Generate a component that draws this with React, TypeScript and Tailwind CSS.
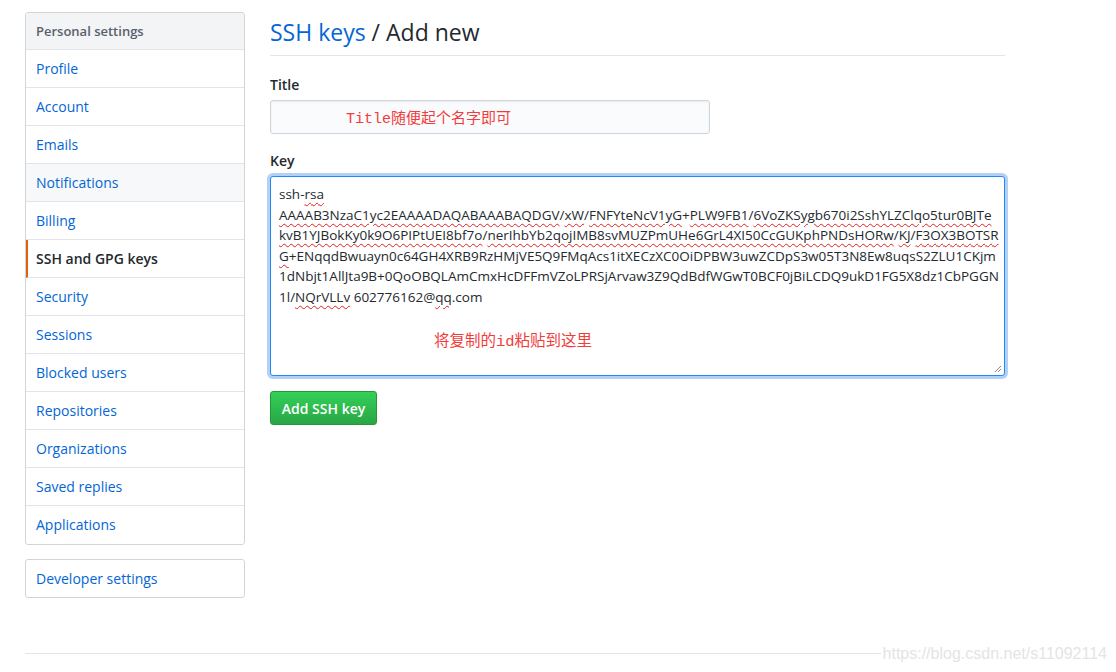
import type { ReactNode } from "react"

const NAV = [
  "Profile",
  "Account",
  "Emails",
  "Notifications",
  "Billing",
  "SSH and GPG keys",
  "Security",
  "Sessions",
  "Blocked users",
  "Repositories",
  "Organizations",
  "Saved replies",
  "Applications",
]

// wavy red underline, like the browser spellcheck marks in the shot
function W({ children }: { children: ReactNode }) {
  return (
    <span className="underline decoration-wavy decoration-[#e02020] decoration-1 underline-offset-[3px]">
      {children}
    </span>
  )
}

function Sidebar() {
  return (
    <div className="flex w-[220px] shrink-0 flex-col gap-[14px]">
      <nav className="overflow-hidden rounded-[3px] border border-[#d1d5da] bg-white">
        <div className="h-[37px] border-b border-[#e1e4e8] bg-[#f3f4f6] px-[10px] text-[13px] leading-[37px] font-semibold text-[#586069]">
          Personal settings
        </div>
        {NAV.map((item, i) => {
          const selected = item === "SSH and GPG keys"
          const hovered = item === "Notifications"
          return (
            <div
              key={item}
              className={
                "h-[38px] px-[10px] text-[14px] leading-[37px] " +
                (i < NAV.length - 1 ? "border-b border-[#e1e4e8] " : "") +
                (selected
                  ? "border-l-2 border-l-[#e36209] pl-[8px] font-semibold text-[#24292e]"
                  : hovered
                    ? "bg-[#f6f8fa] text-[#0366d6]"
                    : "text-[#0366d6]")
              }
            >
              {item}
            </div>
          )
        })}
      </nav>
      <div className="h-[39px] rounded-[3px] border border-[#d1d5da] px-[10px] text-[14px] leading-[37px] text-[#0366d6]">
        Developer settings
      </div>
    </div>
  )
}

function KeyBox() {
  return (
    <div className="relative h-[200px] rounded-[3px] border border-[#2188ff] bg-white px-[8px] pt-[7px] text-[13.5px] leading-[20.5px] whitespace-nowrap text-[#24292e] shadow-[0_0_0_3px_rgba(3,102,214,0.3)]">
      <div>
        ssh-<W>rsa</W>
      </div>
      <div>
        <W>AAAAB3NzaC1yc2EAAAADAQABAAABAQDGV</W>/<W>xW</W>/<W>FNFYteNcV1yG</W>+
        <W>PLW9FB1</W>/<W>6VoZKSygb670i2SshYLZClqo5tur0BJTe</W>
      </div>
      <div>
        <W>kvB1YJBokKy0k9O6PIPtUEI8bf7o</W>/<W>nerIhbYb2qojIMB8svMUZPmUHe6GrL4XI50CcGUKphPNDsHORw</W>/<W>KJ</W>/
        <W>F3OX3BOTSR</W>
      </div>
      <div>
        <W>G</W>+ENqqdBwuayn0c64GH4XRB9RzHMjVE5Q9FMqAcs1itXECzXC0OiDPBW3uwZCDpS3w05T3N8Ew8uqsS2ZLU1CKjm
      </div>
      <div>1dNbjt1AllJta9B+0QoOBQLAmCmxHcDFFmVZoLPRSjArvaw3Z9QdBdfWGwT0BCF0jBiLCDQ9ukD1FG5X8dz1CbPGGN</div>
      <div>
        1l/<W>NQrVLLv</W> 602776162@<W>qq</W>.com
      </div>
      <div className="mt-[25px] pl-[155px] font-['Liberation_Mono','Noto_Sans_CJK_SC',monospace] text-[15.5px] leading-[20px] text-[#f23c3c]">
        将复制的id粘贴到这里
      </div>
      {/* resize grip */}
      <svg className="absolute right-[2px] bottom-[2px]" width="10" height="10" viewBox="0 0 10 10">
        <path d="M9 3 L3 9 M9 6 L6 9" stroke="#888" strokeWidth="1" />
      </svg>
    </div>
  )
}

export default function App() {
  return (
    <div className="relative h-[672px] overflow-hidden bg-white font-['Open_Sans','Noto_Sans_CJK_SC',sans-serif] text-[#24292e]">
      <div className="flex gap-[25px] pt-[12px] pl-[25px]">
        <Sidebar />
        <main className="w-[735px]">
          <div className="border-b border-[#e1e4e8] pt-[3px] pb-[6px] text-[23px] leading-[34px]">
            <span className="text-[#0366d6]">SSH keys</span> / Add new
          </div>
          <div className="mt-[18px] text-[14px] leading-[22px] font-semibold">Title</div>
          <div className="mt-[4px] h-[34px] w-[440px] rounded-[3px] border border-[#d1d5da] bg-[#fafbfc] pt-[3px] pl-[75px] font-['Liberation_Mono','Noto_Sans_CJK_SC',monospace] text-[15px] leading-[32px] text-[#f23c3c] shadow-[inset_0_1px_2px_rgba(27,31,35,0.075)]">
            Title随便起个名字即可
          </div>
          <div className="mt-[16px] text-[14px] leading-[22px] font-semibold">Key</div>
          <div className="mt-[4px]">
            <KeyBox />
          </div>
          <button className="mt-[15px] h-[34px] w-[107px] rounded-[3px] border border-[#26973d] bg-gradient-to-b from-[#34d058] to-[#28a745] text-[14px] font-semibold text-white">
            Add SSH key
          </button>
        </main>
      </div>
      <div className="absolute top-[653px] right-0 left-[25px] border-t border-[#e1e4e8]" />
      <div className="absolute top-[643px] right-0 bg-white pr-[9px] pl-[2px] font-['Liberation_Sans',sans-serif] text-[16px] leading-[22px] text-[#e4e4e4]">
        https://blog.csdn.net/s11092114
      </div>
    </div>
  )
}
